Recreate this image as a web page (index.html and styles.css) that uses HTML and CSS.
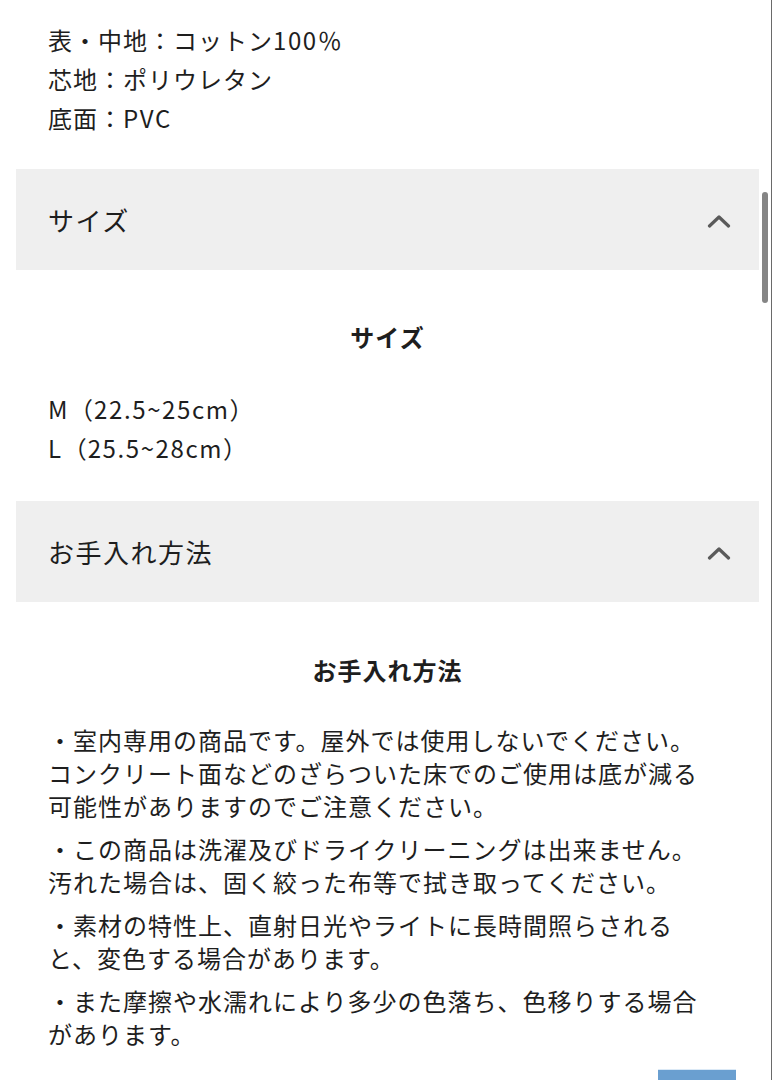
FILE: index.html
```html
<!DOCTYPE html>
<html lang="ja">
<head>
<meta charset="utf-8">
<link rel="stylesheet" href="styles.css">
</head>
<body>
<div class="page">
  <div class="block material">
    <p class="line">表・中地：コットン<span class="lat">100</span>％</p>
    <p class="line">芯地：ポリウレタン</p>
    <p class="line">底面：<span class="lat">PVC</span></p>
  </div>

  <div class="acc-head">
    <span class="acc-title">サイズ</span>
    <svg class="chev" width="24" height="14" viewBox="0 0 24 14"><polyline points="2.5,12 12,3 21.5,12" fill="none" stroke="#5a5a5a" stroke-width="3.2" stroke-linecap="round" stroke-linejoin="round"/></svg>
  </div>
  <div class="acc-body size-body">
    <h3 class="sub-title">サイズ</h3>
    <div class="block">
      <p class="line"><span class="lat">M</span>（<span class="lat">22.5~25cm</span>）</p>
      <p class="line"><span class="lat">L</span>（<span class="lat">25.5~28cm</span>）</p>
    </div>
  </div>

  <div class="acc-head">
    <span class="acc-title">お手入れ方法</span>
    <svg class="chev" width="24" height="14" viewBox="0 0 24 14"><polyline points="2.5,12 12,3 21.5,12" fill="none" stroke="#5a5a5a" stroke-width="3.2" stroke-linecap="round" stroke-linejoin="round"/></svg>
  </div>
  <div class="acc-body care-body">
    <h3 class="sub-title">お手入れ方法</h3>
    <div class="block care">
      <p class="para">・室内専用の商品です。屋外では使用しないでください。<br>コンクリート面などのざらついた床でのご使用は底が減る<br>可能性がありますのでご注意ください。</p>
      <p class="para">・この商品は洗濯及びドライクリーニングは出来ません。<br>汚れた場合は、固く絞った布等で拭き取ってください。</p>
      <p class="para">・素材の特性上、直射日光やライトに長時間照らされる<br>と、変色する場合があります。</p>
      <p class="para">・また摩擦や水濡れにより多少の色落ち、色移りする場合<br>があります。</p>
    </div>
  </div>
</div>
<div class="top-btn"></div>
<div class="scroll-thumb"></div>
<div class="edge-line"></div>
</body>
</html>
```

FILE: styles.css
```css
html, body {
  margin: 0;
  padding: 0;
  background: #ffffff;
}
body {
  font-family: "Noto Sans CJK JP", "Noto Sans", sans-serif;
  color: #1e1e1e;
  font-size: 24px;
  letter-spacing: 1px;
  overflow: hidden;
}
.lat {
  letter-spacing: 1.6px;
}
.page {
  display: flex;
  flex-direction: column;
  padding-top: 20px;
}
.block {
  padding: 0 32px 0 48px;
}
.line {
  margin: 0;
  line-height: 39px;
}
.material {
  padding-bottom: 32px;
}
.acc-head {
  margin: 0 16px;
  height: 101px;
  background: #efefef;
  display: flex;
  align-items: center;
  justify-content: space-between;
  padding: 0 28px 0 32px;
}
.acc-title {
  font-size: 26px;
  letter-spacing: 1.5px;
  line-height: 1;
}
.chev {
  display: block;
  margin-top: 2px;
}
.acc-body {
  display: flex;
  flex-direction: column;
}
.size-body {
  padding: 47px 0 34px;
}
.care-body {
  padding: 48px 0 0;
}
.sub-title {
  margin: 0;
  text-align: center;
  font-size: 24px;
  font-weight: 700;
  line-height: 39px;
}
.size-body .sub-title {
  margin-bottom: 33px;
}
.care-body .sub-title {
  margin-bottom: 34px;
}
.care {
  display: flex;
  flex-direction: column;
  gap: 10px;
}
.para {
  margin: 0;
  line-height: 33px;
  white-space: nowrap;
}
.top-btn {
  position: fixed;
  left: 658px;
  top: 1070px;
  width: 78px;
  height: 78px;
  background: #6a9fd0;
  box-shadow: 0 -1px 0 #dbe9f6;
}
.scroll-thumb {
  position: fixed;
  left: 762px;
  top: 192px;
  width: 6px;
  height: 111px;
  border-radius: 3px;
  background: #858585;
}
.edge-line {
  position: fixed;
  left: 771px;
  top: 0;
  width: 1px;
  height: 1080px;
  background: #6a6a6a;
}
```
